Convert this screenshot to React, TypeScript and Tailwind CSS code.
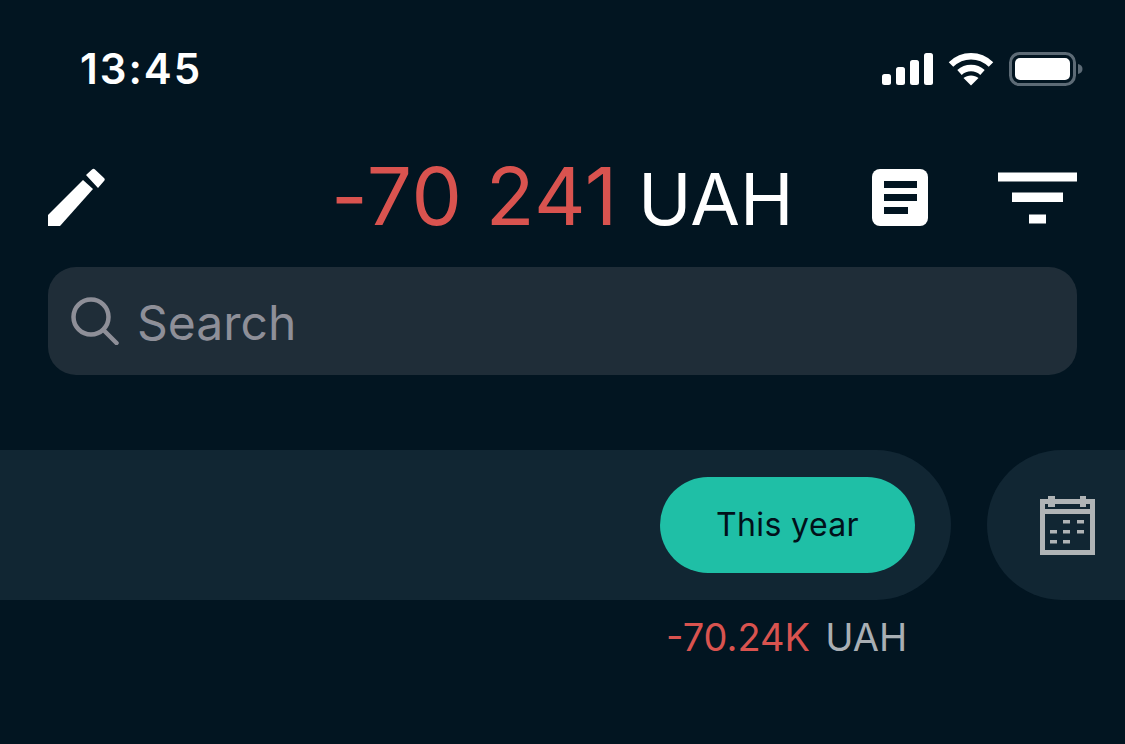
export default function App() {
  const font = { fontFamily: "Inter, 'Liberation Sans', sans-serif" };
  return (
    <div style={font} className="w-[1125px] h-[744px] bg-[#021521] overflow-hidden flex flex-col">
      <div className="h-[139px] pt-[41px] pl-[80px] pr-[42px] flex items-start justify-between shrink-0">
        <span className="text-[42px] leading-[56px] font-semibold text-white tracking-[2px] w-[125px]">13:45</span>
        <div className="flex items-center gap-[15px] h-[56px]">
          <svg width="51" height="32" viewBox="0 0 51 32" fill="#fff">
            <rect x="0" y="21" width="9" height="11" rx="2.5" />
            <rect x="14" y="14" width="9" height="18" rx="2.5" />
            <rect x="28" y="7" width="9" height="25" rx="2.5" />
            <rect x="42" y="0" width="9" height="32" rx="2.5" />
          </svg>
          <svg width="46" height="34" viewBox="0 0 46 34" fill="none">
            <path d="M3 12.5C14.5 1.5 31.5 1.5 43 12.5" stroke="#fff" strokeWidth="6.5" />
            <path d="M11.5 20.5C18 14.5 28 14.5 34.5 20.5" stroke="#fff" strokeWidth="6.5" />
            <path d="M23 33.5L15.5 26C19.5 22.5 26.5 22.5 30.5 26Z" fill="#fff" />
          </svg>
          <svg width="74" height="34" viewBox="0 0 74 34" fill="none">
            <rect x="1.5" y="1.5" width="64" height="31" rx="9" stroke="#5d6b76" strokeWidth="3" />
            <rect x="6" y="6" width="55" height="22" rx="5" fill="#fff" />
            <path d="M69 12C72 12.6 73.5 14.5 73.5 17C73.5 19.5 72 21.4 69 22Z" fill="#5d6b76" />
          </svg>
        </div>
      </div>

      <div className="h-[128px] px-[48px] pb-[12px] flex items-center justify-between shrink-0">
        <svg width="58" height="58" viewBox="0 0 58 58" fill="#fff">
          <path d="M0 47L35 12L45 21L12 58H0Z" />
          <path d="M38 7L44 1.5C45 .6 46 .6 47 1.5L56 10C57 11 57 12 56 13L50 20Z" />
        </svg>
        <div className="flex items-baseline ml-[225px]">
          <span className="text-[80px] leading-[92px] text-[#d9534f] tracking-[0.7px]">-70 241</span>
          <span className="text-[72px] leading-[92px] text-white ml-[20px]">UAH</span>
        </div>
        <div className="flex items-center gap-[70px] ml-auto">
          <svg width="56" height="57" viewBox="0 0 56 57">
            <rect width="56" height="57" rx="8" fill="#fff" />
            <rect x="12" y="12" width="33" height="7" fill="#021521" />
            <rect x="12" y="25" width="33" height="7" fill="#021521" />
            <rect x="12" y="38" width="24" height="7" fill="#021521" />
          </svg>
          <svg width="79" height="56" viewBox="0 0 79 56" fill="#fff">
            <rect x="0" y="3.5" width="79" height="9" />
            <rect x="14" y="23.5" width="51" height="9.5" />
            <rect x="31" y="45.5" width="17" height="9" />
          </svg>
        </div>
      </div>

      <div className="mx-[48px] h-[108px] rounded-[28px] bg-[#1f2d38] flex items-center pl-[23px] shrink-0">
        <svg width="48" height="48" viewBox="0 0 48 48" fill="none" stroke="#8e8f98" strokeWidth="4.5" strokeLinecap="round">
          <circle cx="20" cy="20" r="17.5" />
          <path d="M32.5 33L45.5 46" />
        </svg>
        <span className="text-[48px] leading-[60px] text-[#8e8f98] ml-[18px] pt-[3px]">Search</span>
      </div>

      <div className="flex gap-[36px] mt-[75px] h-[150px] shrink-0">
        <div className="w-[951px] rounded-r-[75px] bg-[#112633] flex items-center justify-end pr-[36px]">
          <div className="w-[255px] h-[96px] rounded-[48px] bg-[#1fbfa6] flex items-center justify-center">
            <span className="text-[32px] leading-[40px] text-[#01101a] tracking-[0.4px]">This year</span>
          </div>
        </div>
        <div className="flex-1 rounded-l-[75px] bg-[#112633] flex items-center pl-[53px]">
          <svg width="55" height="59" viewBox="0 0 55 59" fill="none">
            <rect x="2.5" y="5.5" width="50" height="51" stroke="#b0b4b6" strokeWidth="5" />
            <rect x="0" y="13" width="55" height="5" fill="#b0b4b6" />
            <rect x="8" y="0" width="7" height="11" fill="#b0b4b6" />
            <rect x="40" y="0" width="6" height="11" fill="#b0b4b6" />
            <g fill="#b0b4b6">
              <rect x="23" y="24" width="7" height="3.5" />
              <rect x="37" y="24" width="7" height="3.5" />
              <rect x="10" y="34" width="7" height="3.5" />
              <rect x="23" y="34" width="7" height="3.5" />
              <rect x="37" y="34" width="7" height="3.5" />
              <rect x="10" y="44" width="7" height="3.5" />
              <rect x="23" y="44" width="7" height="3.5" />
            </g>
          </svg>
        </div>
      </div>

      <div className="flex items-baseline pl-[666px] pt-[13px]">
        <span className="text-[38px] leading-[48px] text-[#d9534f]">-70.24K</span>
        <span className="text-[38px] leading-[48px] text-[#a9afb4] ml-[15px]">UAH</span>
      </div>
    </div>
  );
}
